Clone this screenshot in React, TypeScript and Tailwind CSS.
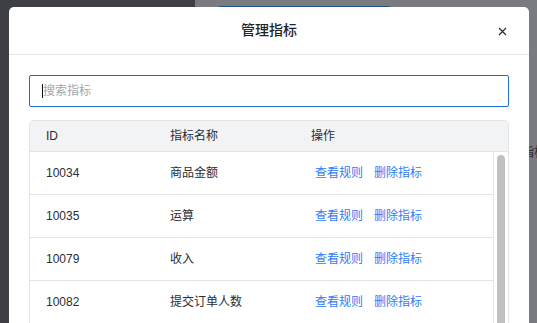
const rows = [
  { id: "10034", name: "商品金额" },
  { id: "10035", name: "运算" },
  { id: "10079", name: "收入" },
  { id: "10082", name: "提交订单人数" },
];

const font = { fontFamily: '"Liberation Sans", "Noto Sans CJK SC", sans-serif' };

export default function App() {
  return (
    <div className="relative h-[323px] w-[537px] overflow-hidden bg-[#797b80]" style={font}>
      {/* Page behind the dimmed overlay */}
      <div className="flex h-full">
        <aside className="w-[195px] bg-[#3e4045]" />
        <main className="flex flex-1 flex-col pt-[6px] pl-[23px]">
          <div className="h-8 w-[173px] rounded-[3px] bg-[#1f4e89]" />
          <div className="mt-[104px] flex justify-end text-[13px] text-[#2b2c2e]">
            <span className="mr-[-10px]">指标</span>
          </div>
        </main>
      </div>

      {/* Modal */}
      <div className="absolute inset-0 pl-[9px] pt-[7px]">
        <div className="h-[330px] w-[520px] rounded-t-[5px] bg-white">
          {/* Header */}
          <div className="relative flex h-[48px] items-center justify-center border-b border-[#e3e4e8]">
            <h2 className="text-[14px] font-medium text-[#1f2329]">管理指标</h2>
            <button className="absolute right-[22px] top-[20px] text-[#2b2d31]">
              <svg width="9" height="9" viewBox="0 0 9 9" fill="none" stroke="currentColor" strokeWidth="1.2">
                <path d="M1 1l7 7M8 1L1 8" />
              </svg>
            </button>
          </div>

          <div className="px-5 pt-5">
            {/* Search */}
            <div className="flex h-8 items-center rounded-[2px] border border-[#1c6ee0] pl-[12px]">
              <span className="h-[14px] w-px bg-[#111]" />
              <span className="text-[12px] text-[#a3a6ab]">搜索指标</span>
            </div>

            {/* Table */}
            <div className="mt-[13px] rounded-t-[4px] border border-[#e3e4e8] text-[12px] text-[#2b2d31]">
              <div className="grid h-[31px] grid-cols-[124px_141px_1fr] items-center border-b border-[#e3e4e8] bg-[#f2f3f5] px-4">
                <span>ID</span>
                <span>指标名称</span>
                <span>操作</span>
              </div>
              <div className="flex">
                <div className="flex-1">
                  {rows.map((r) => (
                    <div
                      key={r.id}
                      className="grid h-[43px] grid-cols-[124px_141px_1fr] items-center border-b border-[#e3e4e8] px-4"
                    >
                      <span>{r.id}</span>
                      <span>{r.name}</span>
                      <span className="flex gap-[11px] pl-1 text-[#2f7cf6]">
                        <a>查看规则</a>
                        <a>删除指标</a>
                      </span>
                    </div>
                  ))}
                </div>
                {/* Scrollbar */}
                <div className="w-[15px] border-l border-[#e3e4e8] pt-[3px] pl-[3px]">
                  <div className="h-[200px] w-2 rounded-full bg-[#c1c1c1]" />
                </div>
              </div>
            </div>
          </div>
        </div>
      </div>
    </div>
  );
}
